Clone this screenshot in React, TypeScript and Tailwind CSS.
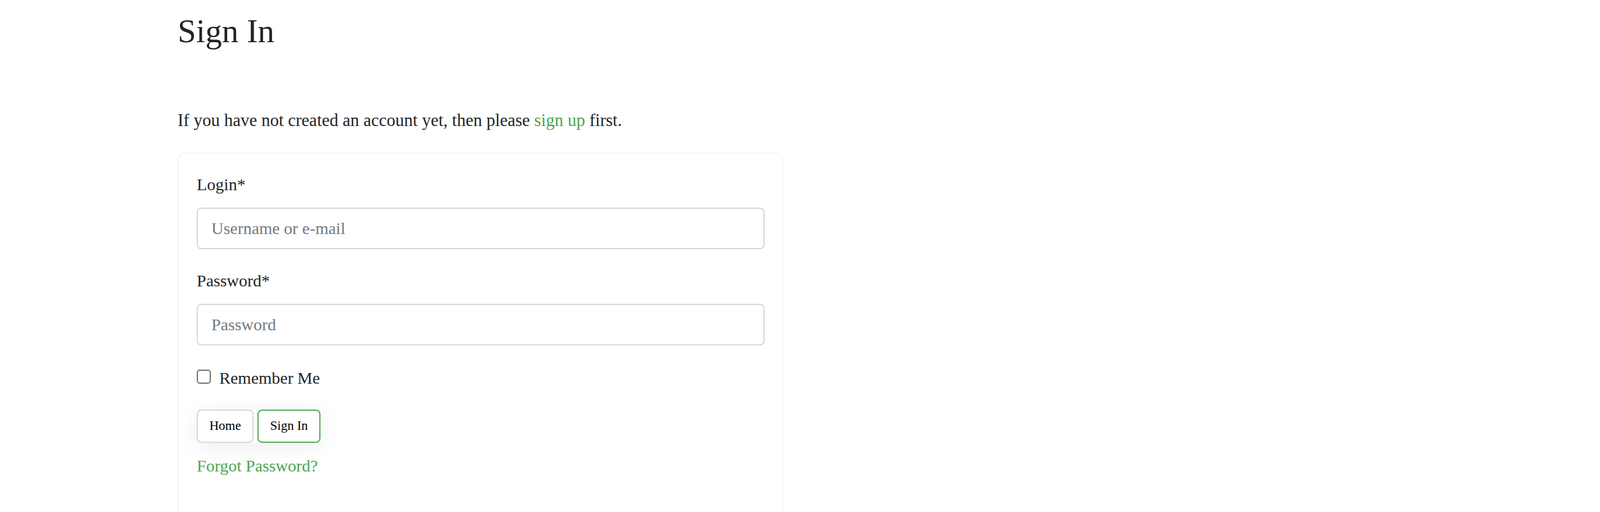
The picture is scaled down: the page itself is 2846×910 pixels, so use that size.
import React from "react";

export default function App() {
  return (
    <div
      className="h-[910px] overflow-hidden bg-white text-[#212529]"
      style={{ fontFamily: '"Liberation Serif", "Times New Roman", serif' }}
    >
      <div className="pl-[316px] pt-[20px]">
        <h1 className="text-[59px] leading-[71px] font-normal m-0">Sign In</h1>
        <p className="mt-[100px] text-[31px] leading-[46px]">
          If you have not created an account yet, then please{" "}
          <a href="#" className="text-[#4ca550] no-underline">
            sign up
          </a>{" "}
          first.
        </p>
        <div className="mt-[34px] w-[1078px] rounded-[14px] border-2 border-[#f5f5f5] px-[32px] pt-[32px] pb-[90px]">
          <label className="block text-[30px] leading-[45px] mb-[19px]">Login*</label>
          <input
            type="text"
            placeholder="Username or e-mail"
            className="block w-[1010px] h-[74px] rounded-[8px] border-2 border-[#d2d6db] px-[24px] text-[30px] text-[#212529] placeholder:text-[#737a82] outline-none"
            style={{ fontFamily: '"Liberation Serif", "Times New Roman", serif' }}
          />
          <label className="block mt-[33px] text-[30px] leading-[45px] mb-[19px]">Password*</label>
          <input
            type="password"
            placeholder="Password"
            className="block w-[1010px] h-[74px] rounded-[8px] border-2 border-[#d2d6db] px-[24px] text-[30px] text-[#212529] placeholder:text-[#737a82] outline-none"
            style={{ fontFamily: '"Liberation Serif", "Times New Roman", serif' }}
          />
          <div className="mt-[35px] flex items-start gap-[15px]">
            <span className="mt-[8px] block w-[25px] h-[25px] rounded-[5px] border-2 border-[#6c6c6c] bg-white" />
            <span className="text-[30px] leading-[45px]">Remember Me</span>
          </div>
          <div className="mt-[34px] flex gap-[7px] w-fit rounded-[10px] shadow-[0_8px_40px_rgba(0,0,0,0.07)]">
            <button className="h-[59px] w-[101px] rounded-[8px] border-2 border-[#d3d7dc] bg-white text-[23px] text-black">
              Home
            </button>
            <button className="h-[59px] w-[112px] rounded-[8px] border-2 border-[#4ca550] bg-white text-[23px] text-black">
              Sign In
            </button>
          </div>
          <a href="#" className="block mt-[18px] text-[30px] leading-[45px] text-[#4ca550] no-underline w-fit">
            Forgot Password?
          </a>
        </div>
      </div>
    </div>
  );
}
